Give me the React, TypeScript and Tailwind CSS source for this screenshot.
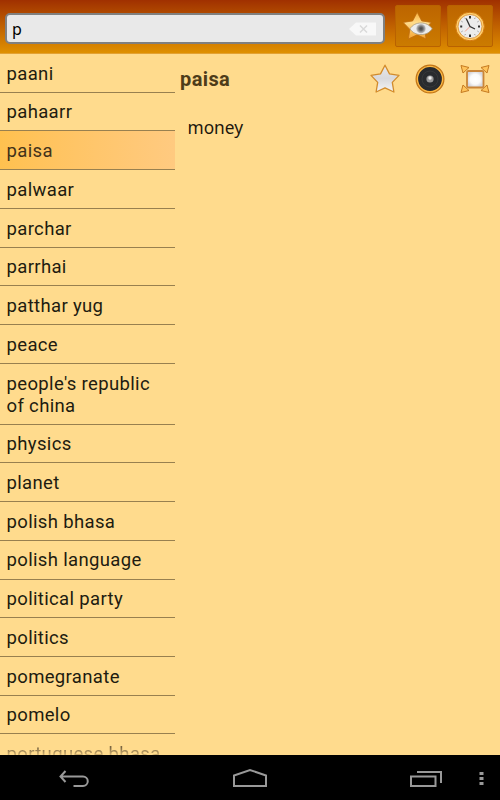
const words = [
  "paani",
  "pahaarr",
  "paisa",
  "palwaar",
  "parchar",
  "parrhai",
  "patthar yug",
  "peace",
  "people's republic of china",
  "physics",
  "planet",
  "polish bhasa",
  "polish language",
  "political party",
  "politics",
  "pomegranate",
  "pomelo",
];

const star = "M15 1.2l4.5 8.7 9.5 1.5-6.7 7 1.6 9.6L15 23.8 6.100 28l1.600-9.600-6.700-7 9.500-1.500z";

function FavoritesIcon() {
  return (
    <svg width="32" height="32" viewBox="0 0 32 32">
      <defs>
        <linearGradient id="gold" x1="0" y1="0" x2="0" y2="1">
          <stop offset="0" stopColor="#f8ae38" />
          <stop offset=".4" stopColor="#ffdc8c" />
          <stop offset="1" stopColor="#f5a532" />
        </linearGradient>
        <radialGradient id="pupil">
          <stop offset="0" stopColor="#444" />
          <stop offset=".4" stopColor="#666" />
          <stop offset="1" stopColor="#ccc" />
        </radialGradient>
      </defs>
      <path d={star} transform="translate(.2 1)" fill="url(#gold)" stroke="#c06d10" strokeWidth=".8" />
      <path d="M8 18.8C10.5 14.8 14.5 13 19 13c4.5 0 8.5 1.8 11.200 5.800C27.500 22.800 23.500 24.600 19 24.600S10.500 22.800 8 18.800z" fill="#ececec" stroke="#a89c80" strokeWidth=".8" />
      <circle cx="19" cy="18.7" r="4.8" fill="url(#pupil)" />
    </svg>
  );
}

function HistoryIcon() {
  return (
    <svg width="32" height="32" viewBox="0 0 32 32">
      <circle cx="16" cy="16.5" r="14.3" fill="#ffcf6e" stroke="#d47a10" strokeWidth="1" />
      <circle cx="16" cy="16.5" r="12" fill="#ececec" stroke="#d98a28" strokeWidth=".8" />
      <path d="M16 6v2.5M16 24.5V27M6.2 16.5h2M24 16.5h2" stroke="#333" strokeWidth="2" />
      <path d="M10.8 7.8l.6 1M21.2 7.8l-.6 1M7.5 11.3l1 .6M24.5 11.3l-1 .6M7.5 21.7l1-.6M24.5 21.7l-1-.6M10.8 25.2l.6-1M21.2 25.2l-.6-1" stroke="#888" />
      <path d="M16 16.5l-5 5" stroke="#f2a18e" />
      <path d="M12.2 8.5l3.8 8 5 2.5" fill="none" stroke="#333" strokeWidth="1.3" />
    </svg>
  );
}

function StarIcon() {
  return (
    <svg width="30" height="30" viewBox="0 0 30 30">
      <defs>
        <linearGradient id="silver" x1="0" y1="0" x2="0" y2="1">
          <stop offset="0" stopColor="#e8e8e8" />
          <stop offset=".5" stopColor="#d9d9dc" />
          <stop offset="1" stopColor="#f5f5f5" />
        </linearGradient>
      </defs>
      <path d={star} fill="url(#silver)" stroke="#d28b2b" strokeWidth="1.3" strokeLinejoin="round" />
    </svg>
  );
}

function SpeakerIcon() {
  return (
    <svg width="30" height="30" viewBox="0 0 30 30">
      <circle cx="15" cy="15" r="13.8" fill="#26282b" stroke="#c47515" strokeWidth="1.4" />
      <circle cx="15" cy="15" r="12.6" fill="#292b2e" stroke="#ffb840" strokeWidth="1.4" />
      <circle cx="15" cy="15" r="8" fill="none" stroke="#36383a" />
      <circle cx="15" cy="15" r="3.6" fill="#999" />
      <circle cx="15" cy="14" r="1.7" fill="#eee" />
    </svg>
  );
}

function ExpandIcon() {
  return (
    <svg width="30" height="30" viewBox="0 0 30 30">
      <defs>
        <radialGradient id="panel">
          <stop offset="0" stopColor="#fff" />
          <stop offset=".6" stopColor="#fafafa" />
          <stop offset="1" stopColor="#d5d5da" />
        </radialGradient>
      </defs>
      <path d="M1 1.5l8 2-6 5.5zM29 1.5l-8 2 6 5.5zM1 28.5l8-2-6-5.5zM29 28.5l-8-2 6-5.5z" fill="#ffc45b" stroke="#c57a20" strokeLinejoin="round" />
      <rect x="7" y="7" width="16.5" height="16.5" rx="1.5" fill="url(#panel)" stroke="#ca8538" strokeWidth="1.8" />
    </svg>
  );
}

function Header() {
  return (
    <header className="flex h-[54px] items-start border-b border-[#e3a132] bg-linear-to-b from-[#a03000] to-[#df9000] pl-[5px]">
      <div className="mt-[13px] flex h-[31px] w-[380px] items-center justify-between rounded-[5px] border-2 border-[#808080] bg-[#e9e9e9] pr-[6px] pl-[5px]">
        <span className="font-['Noto_Sans'] text-[16px] leading-none text-black">p</span>
        <svg width="29" height="14" viewBox="0 0 29 14">
          <path d="M1 7l7-6.5h20v13H8z" fill="#f8f8f8" />
          <path d="M12 3.5l7 7M19 3.5l-7 7" stroke="#d9d9d9" strokeWidth="1.5" />
        </svg>
      </div>
      <button className="mt-[5px] ml-[10px] flex h-[42px] w-[46px] items-center justify-center rounded-[2px] border border-[#b96200] bg-linear-to-b from-[#bd6500] to-[#cb7b00]">
        <FavoritesIcon />
      </button>
      <button className="mt-[5px] ml-[6px] flex h-[42px] w-[46px] items-center justify-center rounded-[2px] border border-[#b96200] bg-linear-to-b from-[#bd6500] to-[#cb7b00]">
        <HistoryIcon />
      </button>
    </header>
  );
}

function WordList() {
  return (
    <ul className="w-[175px] shrink-0 overflow-hidden">
      {words.map((word) => (
        <li
          key={word}
          className={
            "border-b border-[#98804f] pt-[9.7px] pr-3 pb-[6.1px] pl-[6.5px] text-[18.5px] leading-[21.95px] tracking-[0.35px] " +
            (word === "paisa" ? "bg-linear-to-r from-[#ffc14f] to-[#ffca80] text-[#42321a]" : "text-[#211b10]")
          }
        >
          {word}
        </li>
      ))}
      <li className="pt-[9px] pl-[6.5px] text-[18.5px] leading-[22px] tracking-[0.35px]">
        <span className="bg-linear-to-b from-[#796541] from-20% to-[#efcb82] to-65% bg-clip-text text-transparent">portuguese bhasa</span>
      </li>
    </ul>
  );
}

function Definition() {
  return (
    <main className="flex-1">
      <div className="flex h-[50px] items-center pl-[5px]">
        <h1 className="flex-1 text-[20px] font-bold tracking-[0.4px] text-[#4e3c19]">paisa</h1>
        <div className="flex gap-[15px] pr-[10px]">
          <StarIcon />
          <SpeakerIcon />
          <ExpandIcon />
        </div>
      </div>
      <p className="pt-[12px] pl-[12.5px] font-['Noto_Sans'] text-[17.3px] leading-6 text-[#1c170d]">money</p>
    </main>
  );
}

function NavBar() {
  return (
    <nav className="flex h-[45px] items-center bg-black">
      <svg width="500" height="45" viewBox="0 0 500 45" fill="none" stroke="#999" strokeWidth="2">
        <path d="M65.5 16L60.5 21.5l5 5.5M61 21.5h22a4.7 4.7 0 0 1 0 9.5h-9.5" />
        <path d="M234 31V20.5l16-5.5 16 5.5V31z" />
        <path d="M411 21.5h24.5V31H411zM417 17h24v11" />
        <path d="M479.5 18.5h4M479.5 23.5h4M479.5 28.5h4" strokeWidth="3" />
      </svg>
    </nav>
  );
}

export default function App() {
  return (
    <div className="flex h-[800px] w-[500px] flex-col overflow-hidden bg-[#ffdb8d] font-[Roboto,sans-serif]">
      <Header />
      <div className="flex min-h-0 flex-1 overflow-hidden">
        <WordList />
        <Definition />
      </div>
      <NavBar />
    </div>
  );
}
